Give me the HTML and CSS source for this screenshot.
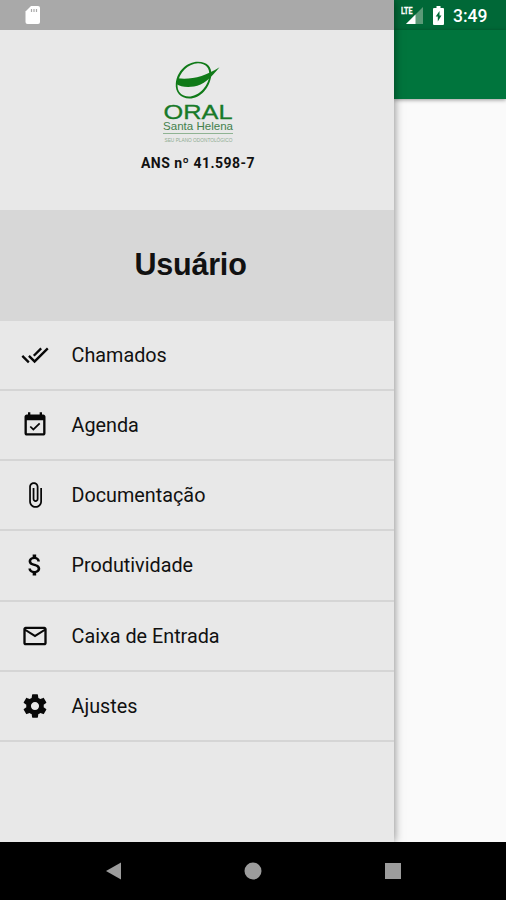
FILE: index.html
```html
<!DOCTYPE html>
<html lang="pt-BR">
<head>
<meta charset="utf-8">
<title>Oral Santa Helena</title>
<link rel="stylesheet" href="styles.css">
</head>
<body>
<div class="phone">
  <div class="screen">
    <aside class="drawer">
      <div class="drawer-status">
        <svg class="sd" viewBox="0 0 16 20"><path fill="#fff" d="M6 1h7a2 2 0 0 1 2 2v14a2 2 0 0 1-2 2H2.500a2 2 0 0 1-2-2V6.500z"/><path stroke="#aaa" stroke-width="1.200" d="M6.500 4v3M9 4v3M11.500 4v3"/></svg>
      </div>
      <header class="brand">
        <svg class="logo" viewBox="160 60 76 86">
          <path fill="#107a18" fill-rule="evenodd" d="M198 61.800C207 61.800 212 67 211.300 75C210 88 200 98.500 189.500 98.500C180.500 98.500 175 92 175.800 83.500C177 71 187 61.800 198 61.800ZM198 63.200C188.500 63.400 179 72.500 177.600 83.500C176.800 91.500 181.500 96.500 189 96.500C198 96.500 208 87 209.300 76C210 68 206 63.200 198 63.200Z"/>
          <path fill="#107a18" d="M177.500 78.300C191 80 205 76.500 219.500 67.200C211 78 203 85 194 86.500C186 87.500 180 86.500 176.500 84Z"/>
          <text class="logo-name" x="163.500" y="119.300" textLength="69" lengthAdjust="spacingAndGlyphs">ORAL</text>
          <text class="logo-sub" x="163" y="130" textLength="70" lengthAdjust="spacingAndGlyphs">Santa Helena</text>
          <path stroke="#8fb393" stroke-width="1" d="M163 133.500h70"/>
          <text class="logo-tag" x="164.500" y="142" textLength="68" lengthAdjust="spacingAndGlyphs">SEU PLANO ODONTOLÓGICO</text>
        </svg>
        <p class="ans">ANS nº 41.598-7</p>
      </header>
      <div class="user">Usuário</div>
      <nav class="menu">
        <a class="item"><svg viewBox="0 0 24 24"><path d="M18 7l-1.410-1.410-6.340 6.340 1.410 1.410L18 7zm4.240-1.410L11.660 16.170 7.480 12l-1.410 1.410L11.660 19l12-12-1.420-1.410zM.41 13.410L6 19l1.410-1.410L1.830 12 .41 13.410z"/></svg><span>Chamados</span></a>
        <a class="item"><svg viewBox="0 0 24 24"><path d="M16.530 11.060L15.470 10l-4.880 4.880-2.120-2.120-1.060 1.060L10.590 17l5.940-5.940zM19 3h-1V1h-2v2H8V1H6v2H5c-1.110 0-1.990.9-1.990 2L3 19c0 1.100.89 2 2 2h14c1.100 0 2-.9 2-2V5c0-1.100-.9-2-2-2zm0 16H5V8h14v11z"/></svg><span>Agenda</span></a>
        <a class="item"><svg viewBox="0 0 24 24"><path d="M16.500 6v11.500c0 2.210-1.790 4-4 4s-4-1.790-4-4V5c0-1.380 1.120-2.500 2.500-2.500s2.500 1.120 2.500 2.500v10.500c0 .55-.45 1-1 1s-1-.45-1-1V6H10v9.500c0 1.380 1.120 2.500 2.500 2.500s2.500-1.120 2.500-2.500V5c0-2.210-1.790-4-4-4S7 2.790 7 5v12.500c0 3.040 2.460 5.500 5.500 5.500s5.500-2.460 5.500-5.500V6h-1.500z"/></svg><span>Documentação</span></a>
        <a class="item"><svg viewBox="0 0 24 24"><path d="M11.800 10.900c-2.270-.59-3-1.200-3-2.150 0-1.090 1.010-1.850 2.700-1.850 1.780 0 2.440.85 2.500 2.100h2.210c-.07-1.720-1.120-3.300-3.210-3.810V3h-3v2.160c-1.940.42-3.500 1.680-3.500 3.610 0 2.310 1.910 3.460 4.700 4.130 2.500.6 3 1.480 3 2.410 0 .69-.49 1.790-2.700 1.790-2.060 0-2.870-.92-2.980-2.100h-2.200c.12 2.190 1.760 3.420 3.680 3.830V21h3v-2.150c1.950-.37 3.500-1.500 3.500-3.550 0-2.840-2.430-3.810-4.700-4.400z"/></svg><span>Produtividade</span></a>
        <a class="item"><svg viewBox="0 0 24 24"><path d="M20 4H4c-1.100 0-1.990.9-1.990 2L2 18c0 1.100.9 2 2 2h16c1.100 0 2-.9 2-2V6c0-1.100-.9-2-2-2zm0 14H4V8l8 5 8-5v10zm-8-7L4 6h16l-8 5z"/></svg><span>Caixa de Entrada</span></a>
        <a class="item"><svg viewBox="0 0 24 24"><path d="M19.430 12.980c.04-.32.07-.64.07-.98s-.03-.66-.07-.98l2.110-1.650c.19-.15.24-.42.12-.64l-2-3.460c-.12-.22-.39-.3-.61-.22l-2.490 1c-.52-.4-1.080-.73-1.690-.98l-.38-2.650C14.460 2.180 14.250 2 14 2h-4c-.25 0-.46.18-.49.42l-.38 2.650c-.61.25-1.170.59-1.690.98l-2.490-1c-.23-.09-.49 0-.61.22l-2 3.460c-.13.22-.07.49.12.64l2.110 1.650c-.04.32-.07.65-.07.98s.03.66.07.98l-2.110 1.650c-.19.15-.24.42-.12.64l2 3.460c.12.22.39.3.61.22l2.490-1c.52.4 1.080.73 1.690.98l.38 2.650c.03.24.24.42.49.42h4c.25 0 .46-.18.49-.42l.38-2.650c.61-.25 1.170-.59 1.690-.98l2.490 1c.23.09.49 0 .61-.22l2-3.460c.12-.22.07-.49-.12-.64l-2.110-1.650zM12 15.500c-1.930 0-3.500-1.570-3.500-3.500s1.570-3.500 3.500-3.500 3.500 1.570 3.500 3.500-1.570 3.500-3.500 3.500z"/></svg><span>Ajustes</span></a>
      </nav>
    </aside>
    <main class="page">
      <div class="page-status">
        <svg class="signal" viewBox="0 0 24 20"><path fill="#5b9a77" d="M22 1v17H5z"/><path fill="#fff" d="M14.500 8.500V18H5z"/><text class="lte" x="0" y="8" textLength="11.500" lengthAdjust="spacingAndGlyphs">LTE</text></svg>
        <svg class="battery" viewBox="0 0 11 19"><path fill="#fff" d="M3.500 0h4v2H10a1 1 0 0 1 1 1v15a1 1 0 0 1-1 1H1a1 1 0 0 1-1-1V3a1 1 0 0 1 1-1h2.500z"/><path fill="#006b38" d="M6.500 5v4.500H8.500L4.800 15.500v-5H2.700z"/></svg>
        <span class="time">3:49</span>
      </div>
      <div class="appbar"></div>
    </main>
  </div>
  <footer class="navbar">
    <svg viewBox="0 0 18 18"><path d="M2 9L17 .5v17z"/></svg>
    <svg viewBox="0 0 18 18"><circle cx="9" cy="9" r="8.500"/></svg>
    <svg viewBox="0 0 18 18"><path d="M1 1h16v16H1z"/></svg>
  </footer>
</div>
</body>
</html>
```
FILE: styles.css
```css
* { box-sizing: border-box; }
body { margin: 0; font-family: Roboto, "Liberation Sans", sans-serif; color: #111; }
.phone { width: 506px; height: 900px; display: flex; flex-direction: column; overflow: hidden; background: #000; }
.screen { height: 842px; display: flex; }
.drawer { width: 394px; flex: none; background: #e8e8e8; box-shadow: 0 0 9px rgba(0,0,0,.5); z-index: 1; clip-path: inset(0 -16px 0 0); }
.drawer-status { height: 30px; background: #a9a9a9; padding: 5px 0 0 25px; }
.sd { display: block; width: 16px; height: 20px; }
.brand { height: 179.500px; padding-top: 30px; display: flex; flex-direction: column; align-items: center; }
.logo { width: 76px; height: 86px; margin-left: 2px; flex: none; }
.logo-name { font: 20px "Liberation Sans", sans-serif; fill: #187a28; stroke: #187a28; stroke-width: .3; }
.logo-sub { font: 10.500px "Liberation Sans", sans-serif; fill: #43804b; }
.logo-tag { font: 5px "Liberation Sans", sans-serif; fill: #8fac92; }
.ans { margin: 8px 0 0 2px; font-size: 14px; line-height: 18px; font-weight: 700; letter-spacing: .49px; }
.user { height: 111px; background: #d7d7d7; font: bold 30.500px/109px "Liberation Sans", sans-serif; text-align: center; padding-right: 13px; letter-spacing: -.2px; }
.item { display: flex; align-items: center; height: 70.250px; padding-left: 21px; border-bottom: 2px solid #d5d5d5; font-size: 19.800px; }
.item svg { width: 28px; height: 28px; margin-right: 22.500px; fill: #080808; }
.item span { line-height: 24px; padding-top: 2px; }
.page { flex: 1; background: #fafafa; }
.page-status { height: 30px; background: #006837; display: flex; padding-left: 7px; color: #fff; }
.signal { width: 24px; height: 20px; margin-top: 6px; }
.lte { font: bold 9px Roboto, sans-serif; fill: #fff; stroke: #fff; stroke-width: .3; }
.battery { width: 11px; height: 19px; margin: 6px 0 0 8px; }
.time { font-size: 17.500px; font-weight: 500; line-height: 32px; margin-left: 9px; }
.appbar { height: 69px; background: #00753d; box-shadow: 0 1px 4px rgba(0,0,0,.4); }
.navbar { height: 58px; display: flex; justify-content: space-between; align-items: center; padding: 0 104px; }
.navbar svg { width: 18px; height: 18px; fill: #9c9c9c; }
```
